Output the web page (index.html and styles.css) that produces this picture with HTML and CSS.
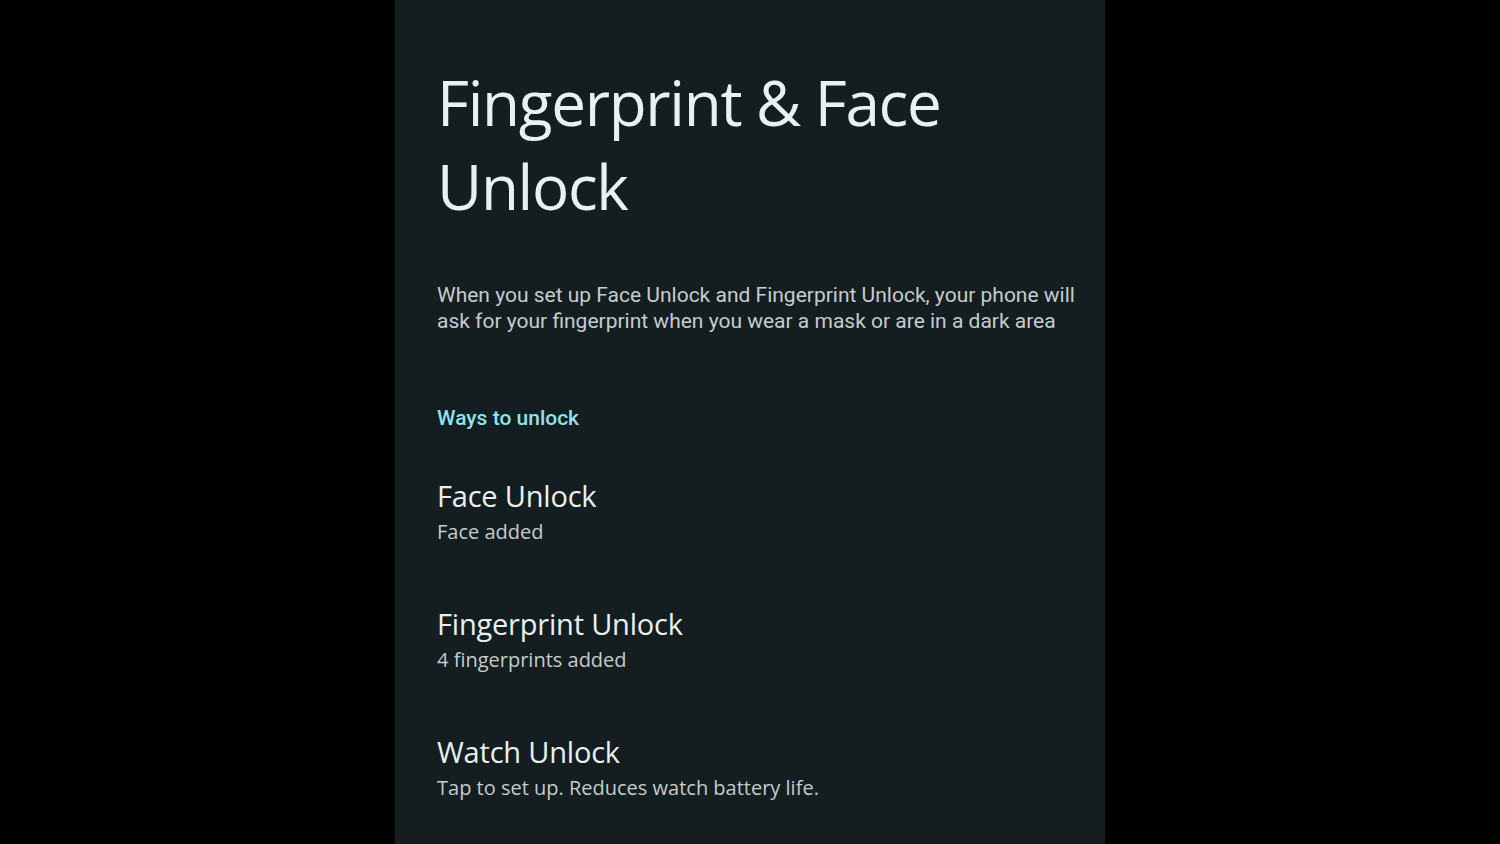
FILE: index.html
```
<!DOCTYPE html>
<html lang="en">

<head>
    <meta charset="UTF-8">
    <meta name="viewport" content="width=device-width, initial-scale=1.0">
    <title>Fingerprint &amp; Face Unlock</title>
    <link rel="stylesheet" href="styles.css">
</head>

<body>
    <div class="screen">
        <h1 class="title">Fingerprint &amp; Face Unlock</h1>
        <p class="intro">
            When you set up Face Unlock and Fingerprint Unlock, your phone will
            ask for your fingerprint when you wear a mask or are in a dark area
        </p>

        <h2 class="section">Ways to unlock</h2>
        <ul class="options">
            <li>
                <div class="name">Face Unlock</div>
                <div class="summary">Face added</div>
            </li>
            <li>
                <div class="name">Fingerprint Unlock</div>
                <div class="summary">4 fingerprints added</div>
            </li>
            <li>
                <div class="name">Watch Unlock</div>
                <div class="summary">Tap to set up. Reduces watch battery life.</div>
            </li>
        </ul>
    </div>
</body>

</html>
```

FILE: styles.css
```
* {
    margin: 0;
    padding: 0;
    box-sizing: border-box;
}

html,
body {
    height: 100%;
    overflow: hidden;
}

body {
    background: #000;
    font-family: "Open Sans", Roboto, sans-serif;
}

ul {
    list-style: none;
}

.screen {
    width: 710px;
    height: 844px;
    margin: 0 auto;
    background-color: #141d1f;
    padding: 60px 24px 0 42px;
}

.title {
    font-weight: 400;
    font-size: 62px;
    line-height: 84px;
    color: #e8f0f1;
    letter-spacing: -1.3px;
    width: 560px;
}

.intro {
    margin-top: 54px;
    font-family: Roboto, sans-serif;
    font-size: 21px;
    line-height: 26px;
    color: #c4cccd;
}

.section {
    margin-top: 71px;
    font-family: Roboto, sans-serif;
    font-weight: 500;
    font-size: 21px;
    line-height: 26px;
    color: #8fe3ee;
}

.options {
    margin-top: 46px;
}

.options li {
    height: 128px;
}

.name {
    font-size: 29px;
    line-height: 38px;
    color: #e8f0f1;
    letter-spacing: -0.2px;
}

.summary {
    font-size: 20px;
    line-height: 34px;
    color: #c4cccd;
}
```
